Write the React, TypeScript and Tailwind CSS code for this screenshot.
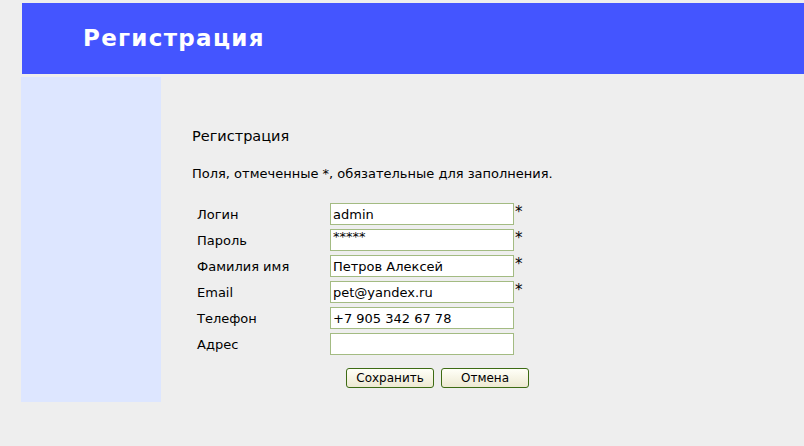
import { useState } from "react"

const fields = [
  { label: "Логин", value: "admin", required: true },
  { label: "Пароль", value: "*****", required: true, pass: true },
  { label: "Фамилия имя", value: "Петров Алексей", required: true },
  { label: "Email", value: "pet@yandex.ru", required: true },
  { label: "Телефон", value: "+7 905 342 67 78", required: false },
  { label: "Адрес", value: "", required: false },
]

export default function App() {
  const [values, setValues] = useState(fields.map(f => f.value))

  return (
    <div className="w-[804px] h-[446px] bg-[#eeeeee] font-['DejaVu_Sans',sans-serif] text-black overflow-hidden">
      {/* HEADER */}
      <div className="ml-[22px] mt-[3px] h-[71px] bg-[#4455ff] flex items-center pl-[61px]">
        <h1 className="text-white font-['DejaVu_Sans',sans-serif] font-bold text-[23px] tracking-[1.3px] leading-none">
          Регистрация
        </h1>
      </div>

      <div className="flex mt-[3px] ml-[21px]">
        {/* SIDEBAR */}
        <div className="w-[140px] h-[325px] bg-[#dde6ff]" />

        {/* CONTENT */}
        <div className="pl-[31px] pt-[51px] text-[13px]">
          <h2 className="text-[14.5px] leading-[16px]">Регистрация</h2>
          <p className="mt-[22px] leading-[16px]">Поля, отмеченные *, обязательные для заполнения.</p>

          <div className="mt-[21px] ml-[5px] flex flex-col gap-[4px]">
            {fields.map((f, i) => (
              <div key={f.label} className="flex items-center h-[22px]">
                <span className="w-[133px] pt-[2px]">{f.label}</span>
                <input
                  type="text"
                  value={f.pass ? "*****" : values[i]}
                  onChange={e => setValues(v => v.map((x, j) => (j === i ? e.target.value : x)))}
                  className={
                    "w-[184px] h-[22px] bg-white border border-[#a3bb82] px-[2px] text-[13px] outline-none " +
                    (f.pass ? "text-[9px] leading-[10px] pb-[8px]" : "")
                  }
                />
                {f.required && <span className="ml-[1px] -mt-[4px] text-[15px] leading-none">*</span>}
              </div>
            ))}
          </div>

          <div className="flex gap-[7px] mt-[13px] ml-[154px]">
            <button className="w-[88px] h-[20px] rounded-[3px] border border-[#3d6b14] bg-gradient-to-b from-[#fffff8] to-[#ede9d2] text-[12px] leading-none">
              Сохранить
            </button>
            <button className="w-[88px] h-[20px] rounded-[3px] border border-[#3d6b14] bg-gradient-to-b from-[#fffff8] to-[#ede9d2] text-[12px] leading-none">
              Отмена
            </button>
          </div>
        </div>
      </div>
    </div>
  )
}
